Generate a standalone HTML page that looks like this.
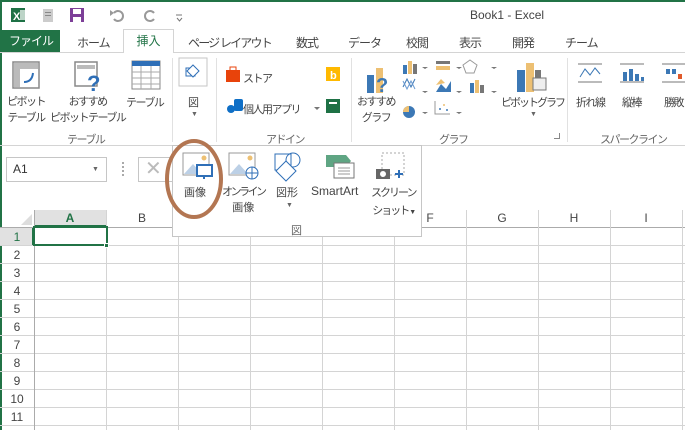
<!DOCTYPE html>
<html><head><meta charset="utf-8"><style>
*{margin:0;padding:0;box-sizing:border-box}
body{width:685px;height:430px;overflow:hidden;background:#fff;font-family:"Liberation Sans","Noto Sans CJK JP",sans-serif;color:#444;position:relative}
.a{position:absolute;white-space:nowrap}
.t{font-size:12px;color:#444;letter-spacing:-1px}
.s{font-size:11px;color:#444;letter-spacing:-1.5px}
.g{font-size:11px;color:#666;letter-spacing:-1.5px}
.hl{position:absolute;left:0;width:685px;height:1px;background:#d4d4d4}
.vl{position:absolute;top:210px;width:1px;height:220px;background:#d4d4d4}
.rn{position:absolute;left:0;width:34px;text-align:center;font-size:12px;color:#444}
.cn{position:absolute;top:210px;width:72px;text-align:center;font-size:12px;color:#444;line-height:17px}
</style></head><body>
<div class="a" style="left:0;top:0;width:685px;height:2px;background:#217346"></div>
<div class="a" style="left:0;top:0;width:2px;height:430px;background:#217346"></div>
<svg class="a" style="left:10px;top:7px" width="180" height="16">
<rect x="1" y="1" width="14" height="14" fill="#1e7145"/><text x="3" y="13" font-size="11" fill="#fff" font-family="Liberation Sans" font-weight="bold">X</text><rect x="10" y="3" width="5" height="10" fill="#fff" opacity=".7"/>
<rect x="33" y="2" width="10" height="13" fill="#ccc"/><rect x="35" y="5" width="6" height="1" fill="#888"/><rect x="35" y="8" width="6" height="1" fill="#888"/>
<rect x="60" y="1" width="14" height="14" fill="#7d3f98"/><rect x="63" y="2" width="8" height="5" fill="#fff"/><rect x="63" y="10" width="8" height="5" fill="#fff"/>
<path d="M104 6 a5 5 0 1 1 0 6" stroke="#999" stroke-width="2" fill="none"/><path d="M100 3 l4 3 -4 3z" fill="#999"/>
<path d="M144 6 a5 5 0 1 0 0 6" stroke="#999" stroke-width="2" fill="none"/>
<path d="M166 8h6M167 11l2.5 3 2.5-3" stroke="#777" fill="none"/>
</svg>
<div class="a" style="left:470px;top:8px;font-size:12px;color:#444">Book1 - Excel</div>
<div class="a" style="left:2px;top:30px;width:58px;height:23px;background:#217346;color:#fff;font-size:12px;line-height:23px;text-align:center;letter-spacing:-1px">ファイル</div>
<div class="a" style="left:0;top:52px;width:685px;height:1px;background:#d4d4d4"></div>
<div class="a" style="left:123px;top:29px;width:51px;height:24px;border:1px solid #d4d4d4;border-bottom:none;background:#fff;color:#217346;font-size:12px;line-height:22px;text-align:center">挿入</div>
<div class="a t" style="left:77px;top:34px">ホーム</div>
<div class="a t" style="left:188px;top:34px;letter-spacing:-1.8px">ページ レイアウト</div>
<div class="a t" style="left:296px;top:34px">数式</div>
<div class="a t" style="left:348px;top:34px">データ</div>
<div class="a t" style="left:406px;top:34px">校閲</div>
<div class="a t" style="left:459px;top:34px">表示</div>
<div class="a t" style="left:512px;top:34px">開発</div>
<div class="a t" style="left:565px;top:34px">チーム</div>
<div class="a" style="left:0;top:145px;width:685px;height:1px;background:#d4d4d4"></div>
<div class="a" style="left:172px;top:58px;width:1px;height:84px;background:#e1e1e1"></div>
<div class="a" style="left:216px;top:58px;width:1px;height:84px;background:#e1e1e1"></div>
<div class="a" style="left:351px;top:58px;width:1px;height:84px;background:#e1e1e1"></div>
<div class="a" style="left:567px;top:58px;width:1px;height:84px;background:#e1e1e1"></div>
<svg class="a" style="left:0;top:55px" width="685" height="70">
<rect x="13" y="7" width="26" height="26" fill="#fff" stroke="#888" stroke-width="1.5"/><rect x="14" y="8" width="24" height="6" fill="#bbb"/><rect x="14" y="14" width="6" height="18" fill="#bbb"/><path d="M24 27 q8 0 9-9" stroke="#2f6fb7" stroke-width="2" fill="none"/>
<rect x="75" y="7" width="22" height="24" fill="#fff" stroke="#888" stroke-width="1.5"/><rect x="77" y="10" width="18" height="4" fill="#bbb"/><text x="87" y="36" font-size="22" font-weight="bold" fill="#2f6fb7" font-family="Liberation Sans">?</text>
<rect x="132" y="6" width="28" height="28" fill="#fff" stroke="#888"/><rect x="132" y="6" width="28" height="5" fill="#2f6fb7"/><path d="M132 17h28M132 23h28M132 29h28M141 11v23M151 11v23" stroke="#aaa"/>
<rect x="179" y="3" width="28" height="28" fill="#fff" stroke="#c6c6c6"/><rect x="186" y="13" width="9" height="8" fill="none" stroke="#2f6fb7"/><path d="M193 10l6 6-6 6-6-6z" fill="#fff" stroke="#2f6fb7"/>
<path d="M226 15h14v12h-14z" fill="#e8430b"/><path d="M230 15v-3h6v3" stroke="#e8430b" fill="none"/>
<rect x="326" y="12" width="14" height="14" fill="#ffb900"/><text x="330" y="24" font-size="11" fill="#fff" font-weight="bold">b</text>
<circle cx="231" cy="54" r="4" fill="#0f6fc6"/><rect x="234" y="44" width="9" height="12" rx="2" fill="#0f6fc6"/>
<rect x="326" y="44" width="14" height="14" fill="#1e7145"/><rect x="329" y="47" width="8" height="2" fill="#fff"/>
<path d="M314 52l3 3 3-3" fill="#777"/>
<rect x="367" y="20" width="7" height="18" fill="#3c78b5"/><rect x="376" y="13" width="7" height="25" fill="#edc073"/><text x="376" y="37" font-size="20" font-weight="bold" fill="#3c78b5">?</text>
<rect x="403" y="10" width="4" height="9" fill="#3c78b5"/><rect x="408" y="6" width="4" height="13" fill="#edc073"/><rect x="413" y="9" width="4" height="10" fill="#777"/>
<path d="M403 32l4-8 4 8 4-8" stroke="#3c78b5" fill="none"/><path d="M403 26l4 8 4-8 4 8" stroke="#6c9bd2" fill="none"/>
<circle cx="409" cy="57" r="6" fill="#3c78b5"/><path d="M409 57v-6a6 6 0 0 0-6 6z" fill="#edc073"/>
<rect x="436" y="6" width="14" height="3" fill="#777"/><rect x="436" y="11" width="14" height="4" fill="#edc073"/>
<path d="M436 37l5-8 5 5 5-8v11z" fill="#3c78b5"/><path d="M436 30l5-6 4 4" fill="#edc073"/>
<path d="M435 46v13h15" stroke="#999" fill="none"/><circle cx="440" cy="54" r="1" fill="#3c78b5"/><circle cx="444" cy="50" r="1" fill="#edc073"/><circle cx="447" cy="55" r="1" fill="#3c78b5"/>
<path d="M470 5l7 5-3 8h-8l-3-8z" fill="none" stroke="#999"/>
<rect x="470" y="28" width="4" height="10" fill="#3c78b5"/><rect x="475" y="25" width="4" height="13" fill="#edc073"/><rect x="480" y="30" width="4" height="8" fill="#777"/>
<rect x="517" y="15" width="8" height="22" fill="#3c78b5"/><rect x="526" y="8" width="8" height="29" fill="#edc073"/><rect x="535" y="15" width="6" height="10" fill="#777"/><rect x="533" y="23" width="13" height="12" fill="#eee" stroke="#777"/>
<path d="M578 9h24M578 27h24" stroke="#777"/><path d="M580 22l5-8 5 6 5-7 5 6" stroke="#3c78b5" fill="none"/>
<path d="M620 9h24M620 27h24" stroke="#777"/><rect x="623" y="17" width="4" height="9" fill="#3c78b5"/><rect x="629" y="14" width="4" height="12" fill="#3c78b5"/><rect x="635" y="19" width="4" height="7" fill="#3c78b5"/><rect x="641" y="22" width="3" height="4" fill="#3c78b5"/>
<path d="M662 9h23M662 27h23" stroke="#777"/><rect x="666" y="14" width="4" height="5" fill="#3c78b5"/><rect x="672" y="14" width="4" height="5" fill="#3c78b5"/><rect x="678" y="19" width="4" height="5" fill="#e05a2b"/>
<path d="M422 12l3 2 3-2M422 36l3 2 3-2M422 57l3 2 3-2M456 12l3 2 3-2M456 36l3 2 3-2M456 57l3 2 3-2M491 12l3 2 3-2M491 36l3 2 3-2" fill="#777"/>
</svg>
<div class="a s" style="left:7px;top:94px;line-height:16px;text-align:center">ピボット<br>テーブル</div>
<div class="a s" style="left:50px;top:94px;line-height:16px;text-align:center">おすすめ<br>ピボットテーブル</div>
<div class="a s" style="left:126px;top:94px">テーブル</div>
<div class="a s" style="left:188px;top:94px">図</div>
<div class="a" style="left:191px;top:111px;font-size:7px;color:#666">▼</div>
<div class="a s" style="left:243px;top:70px">ストア</div>
<div class="a s" style="left:243px;top:101px">個人用アプリ</div>
<div class="a s" style="left:357px;top:94px;line-height:16px;text-align:center">おすすめ<br>グラフ</div>
<div class="a s" style="left:501px;top:94px;letter-spacing:-2px">ピボットグラフ</div>
<div class="a" style="left:530px;top:111px;font-size:7px;color:#666">▼</div>
<div class="a s" style="left:576px;top:94px">折れ線</div>
<div class="a s" style="left:622px;top:94px">縦棒</div>
<div class="a s" style="left:664px;top:94px">勝敗</div>
<div class="a g" style="left:67px;top:131px">テーブル</div>
<div class="a g" style="left:266px;top:131px">アドイン</div>
<div class="a g" style="left:439px;top:131px">グラフ</div>
<div class="a g" style="left:600px;top:131px">スパークライン</div>
<div class="a" style="left:554px;top:133px;width:6px;height:6px;border-right:1px solid #888;border-bottom:1px solid #888"></div>
<div class="a" style="left:6px;top:157px;width:101px;height:25px;border:1px solid #c6c6c6;font-size:12px;line-height:23px;padding-left:6px;color:#333">A1</div>
<div class="a" style="left:92px;top:166px;font-size:7px;color:#666">▼</div>
<div class="a" style="left:122px;top:162px;width:2px;height:14px;border-left:2px dotted #aaa"></div>
<div class="a" style="left:138px;top:157px;width:40px;height:25px;border:1px solid #c6c6c6;color:#bbb;font-size:20px;line-height:22px;padding-left:6px">✕</div>
<div class="a" style="left:34px;top:210px;width:72px;height:17px;background:#e1e1e1;border-bottom:2px solid #217346"></div>
<div class="a" style="left:0;top:228px;width:34px;height:17px;background:#e1e1e1;border-right:2px solid #217346"></div>
<div class="hl" style="top:227px;background:#ababab"></div>
<div class="hl" style="top:245px"></div><div class="hl" style="top:263px"></div><div class="hl" style="top:281px"></div><div class="hl" style="top:299px"></div><div class="hl" style="top:317px"></div><div class="hl" style="top:335px"></div><div class="hl" style="top:353px"></div><div class="hl" style="top:371px"></div><div class="hl" style="top:389px"></div><div class="hl" style="top:407px"></div><div class="hl" style="top:425px"></div>
<div class="vl" style="left:34px;background:#ababab"></div><div class="vl" style="left:106px"></div><div class="vl" style="left:178px"></div><div class="vl" style="left:250px"></div><div class="vl" style="left:322px"></div><div class="vl" style="left:394px"></div><div class="vl" style="left:466px"></div><div class="vl" style="left:538px"></div><div class="vl" style="left:610px"></div><div class="vl" style="left:682px"></div>
<svg class="a" style="left:21px;top:214px" width="11" height="11"><path d="M11 0v11h-11z" fill="#ddd"/></svg>
<div class="cn" style="left:34px;color:#217346;font-weight:bold">A</div>
<div class="cn" style="left:106px">B</div><div class="cn" style="left:394px">F</div><div class="cn" style="left:466px">G</div><div class="cn" style="left:538px">H</div><div class="cn" style="left:610px">I</div>
<div class="rn" style="top:230px;color:#217346">1</div><div class="rn" style="top:248px">2</div><div class="rn" style="top:266px">3</div><div class="rn" style="top:284px">4</div><div class="rn" style="top:302px">5</div><div class="rn" style="top:320px">6</div><div class="rn" style="top:338px">7</div><div class="rn" style="top:356px">8</div><div class="rn" style="top:374px">9</div><div class="rn" style="top:392px">10</div><div class="rn" style="top:410px">11</div>
<div class="a" style="left:33px;top:226px;width:75px;height:20px;border:2px solid #217346"></div>
<div class="a" style="left:104px;top:243px;width:5px;height:5px;background:#217346;border:1px solid #fff"></div>
<div class="a" style="left:172px;top:145px;width:250px;height:92px;background:#fff;border:1px solid #c6c6c6"></div>
<svg class="a" style="left:172px;top:145px" width="250" height="60">
<rect x="11" y="8" width="26" height="22" fill="#fff" stroke="#999"/><path d="M12 29l9-10 9 10z" fill="#bcd0e6"/><circle cx="32" cy="13" r="2.5" fill="#edc073"/><rect x="25" y="20" width="15" height="11" fill="#fff" stroke="#2f6fb7" stroke-width="2"/><path d="M32 31v3" stroke="#2f6fb7" stroke-width="2"/>
<rect x="57" y="8" width="26" height="22" fill="#fff" stroke="#999"/><path d="M58 29l9-10 9 10z" fill="#bcd0e6"/><circle cx="78" cy="13" r="2.5" fill="#edc073"/><circle cx="80" cy="28" r="6" fill="#fff" stroke="#2f6fb7"/><path d="M74 28h12M80 22v12" stroke="#2f6fb7"/>
<rect x="103" y="9" width="16" height="16" fill="#fff" stroke="#2f6fb7"/><circle cx="121" cy="15" r="7" fill="none" stroke="#2f6fb7"/><path d="M114 16l10 10-10 10-10-10z" fill="#fff" stroke="#2f6fb7"/>
<path d="M154 10h20l5 6-5 6h-20z" fill="#5fa583"/><rect x="162" y="18" width="20" height="15" fill="#fff" stroke="#777"/><path d="M166 23h12M166 26h12M166 29h12" stroke="#999"/>
<rect x="210" y="8" width="22" height="22" fill="none" stroke="#aaa" stroke-dasharray="2 2"/><rect x="204" y="24" width="14" height="10" fill="#666"/><circle cx="211" cy="29" r="3" fill="#fff"/><path d="M223 29h8M227 25v8" stroke="#2f6fb7" stroke-width="2"/>
</svg>
<div class="a s" style="left:184px;top:184px;letter-spacing:0">画像</div>
<div class="a s" style="left:222px;top:184px;line-height:16px;text-align:center;letter-spacing:-2.5px">オンライン<br><span style="letter-spacing:0">画像</span></div>
<div class="a s" style="left:276px;top:184px;letter-spacing:0">図形</div>
<div class="a" style="left:286px;top:202px;font-size:7px;color:#666">▼</div>
<div class="a" style="left:311px;top:184px;font-size:12px;color:#444">SmartArt</div>
<div class="a s" style="left:371px;top:184px;line-height:18px;text-align:center;letter-spacing:-2px">スクリーン<br>ショット <span style="font-size:7px">▼</span></div>
<div class="a g" style="left:291px;top:222px">図</div>
<svg class="a" style="left:160px;top:136px" width="70" height="86"><ellipse cx="34" cy="43" rx="27" ry="38" fill="none" stroke="#b37652" stroke-width="4"/></svg>
</body></html>
